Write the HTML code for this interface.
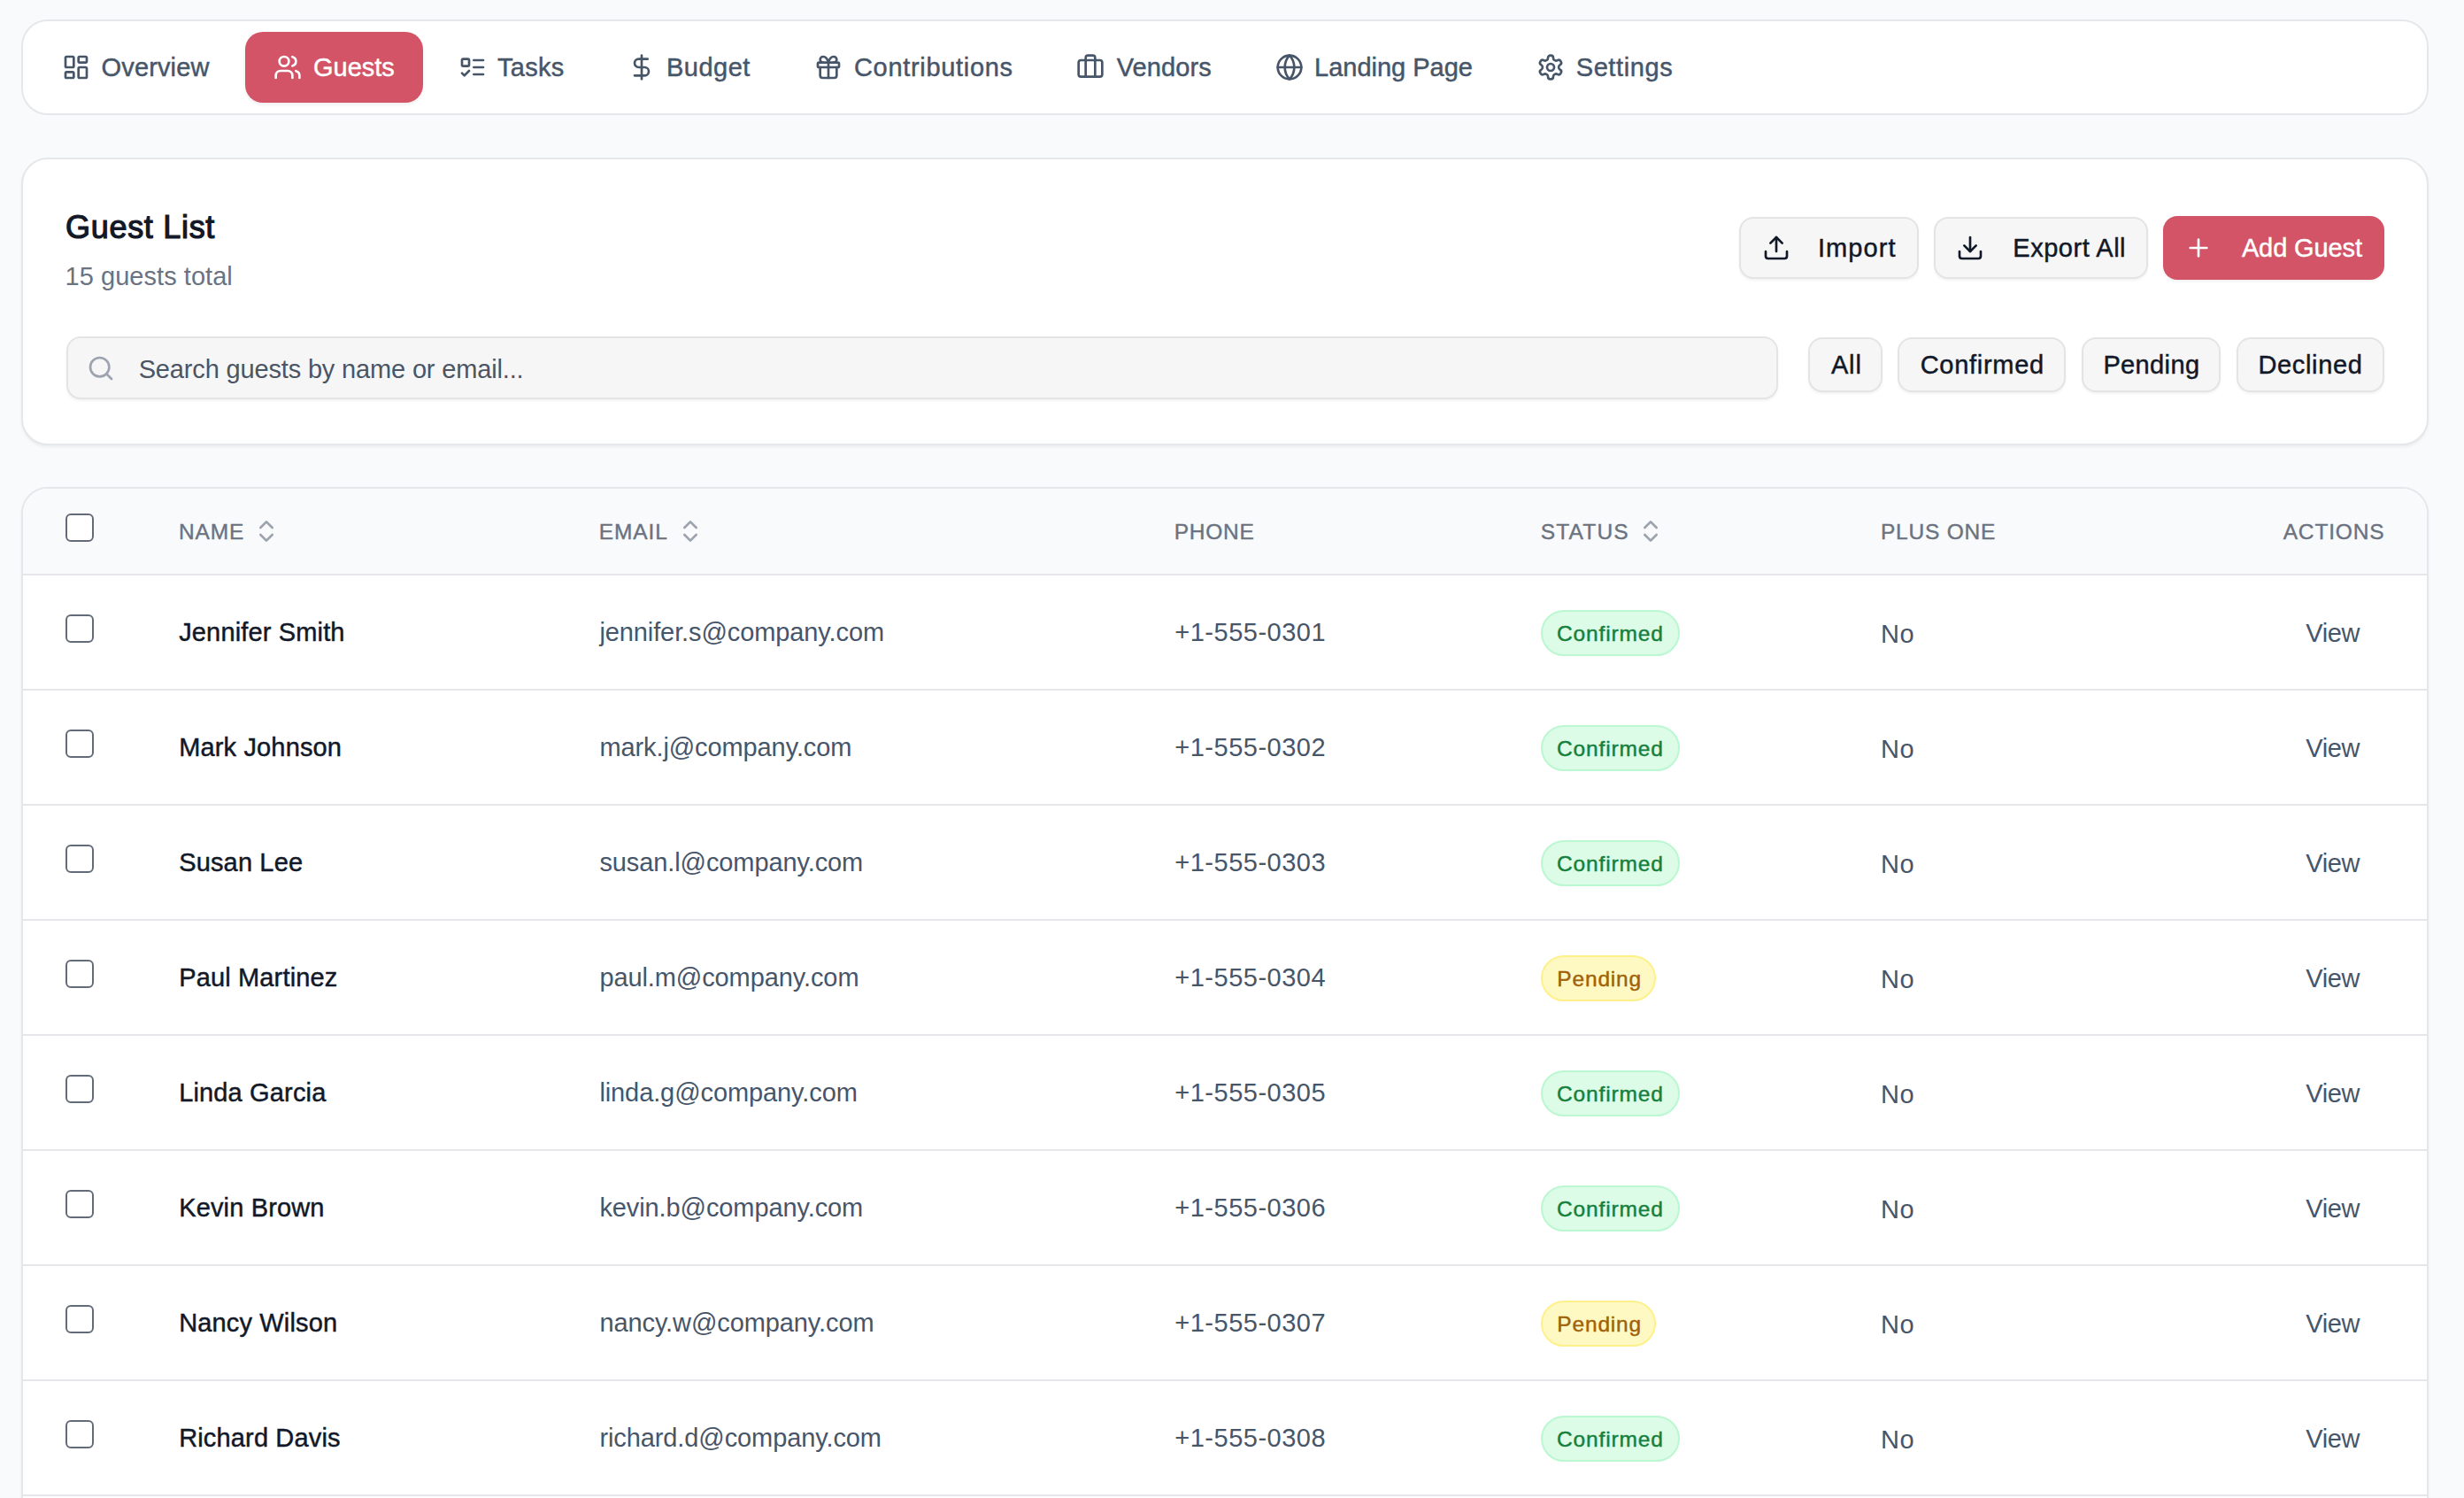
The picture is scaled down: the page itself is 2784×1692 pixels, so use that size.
<!DOCTYPE html>
<html>
<head>
<meta charset="utf-8">
<style>
*{box-sizing:border-box;margin:0;padding:0}
html,body{width:2784px;height:1692px;overflow:hidden;background:#f9fafb;font-family:"Liberation Sans",sans-serif}
.a{position:absolute}
.t{position:absolute;white-space:pre;font-size:29px;line-height:29px}
.md{-webkit-text-stroke:.45px currentColor}
.card{position:absolute;left:24px;width:2720px;background:#fff;border:2px solid #e5e7eb;border-radius:30px}
.ic{position:absolute;width:32px;height:32px;fill:none;stroke:currentColor;stroke-width:2;stroke-linecap:round;stroke-linejoin:round}
.nav{color:#475569;-webkit-text-stroke:.45px #475569}
.btn{position:absolute;background:#f6f6f7;border:2px solid #e4e4e7;border-radius:16px;box-shadow:0 2px 3px rgba(0,0,0,.05)}
.hd{position:absolute;white-space:pre;font-size:24.5px;line-height:24.5px;color:#6b7280;top:589px;-webkit-text-stroke:.4px #6b7280}
.cb{position:absolute;left:74px;width:32px;height:32px;border:2.5px solid #646b78;border-radius:6px;background:#fff}
.nm{color:#111827;letter-spacing:.15px;-webkit-text-stroke:.45px #111827}
.em{color:#475569;letter-spacing:-.1px}
.ph{color:#475569;letter-spacing:.5px}
.no{color:#475569;letter-spacing:.7px}
.vw{color:#475569;letter-spacing:-.37px}
.badge{position:absolute;left:1741px;height:52px;border-radius:26px;border:2px solid}
.bt{position:absolute;white-space:pre;font-size:24.5px;line-height:24.5px}
.ok{background:#dcfce7;border-color:#bbf7d0}
.okt{color:#15803d;letter-spacing:.87px;-webkit-text-stroke:.45px #15803d}
.pd{background:#fef9c3;border-color:#fef08a}
.pdt{color:#a16207;letter-spacing:.83px;-webkit-text-stroke:.45px #a16207}
.line{position:absolute;left:26px;width:2716px;height:2px;background:#e5e7eb}
</style>
</head>
<body>
<!-- NAV CARD -->
<div class="card" style="top:22px;height:108px"></div>
<div class="a" style="left:277px;top:36px;width:201px;height:80px;background:#d35367;border-radius:20px;box-shadow:0 2px 4px rgba(0,0,0,.08)"></div>

<svg class="ic nav" style="left:70px;top:60px" viewBox="0 0 24 24"><rect width="7" height="9" x="3" y="3" rx="1"/><rect width="7" height="5" x="14" y="3" rx="1"/><rect width="7" height="9" x="14" y="12" rx="1"/><rect width="7" height="5" x="3" y="16" rx="1"/></svg>
<div class="t nav" style="left:114.6px;top:62px;letter-spacing:.13px">Overview</div>

<svg class="ic" style="left:308.7px;top:60px;color:#fff" viewBox="0 0 24 24"><path d="M16 21v-2a4 4 0 0 0-4-4H6a4 4 0 0 0-4 4v2"/><circle cx="9" cy="7" r="4"/><path d="M22 21v-2a4 4 0 0 0-3-3.87"/><path d="M16 3.13a4 4 0 0 1 0 7.75"/></svg>
<div class="t md" style="left:354px;top:62px;color:#fff">Guests</div>

<svg class="ic nav" style="left:518px;top:60px" viewBox="0 0 24 24"><rect x="3" y="5" width="6" height="6" rx="1"/><path d="m3 17 2 2 4-4"/><path d="M13 6h8"/><path d="M13 12h8"/><path d="M13 18h8"/></svg>
<div class="t nav" style="left:562px;top:62px;letter-spacing:.25px">Tasks</div>

<svg class="ic nav" style="left:709px;top:60px" viewBox="0 0 24 24"><line x1="12" x2="12" y1="2" y2="22"/><path d="M17 5H9.5a3.5 3.5 0 0 0 0 7h5a3.5 3.5 0 0 1 0 7H6"/></svg>
<div class="t nav" style="left:753px;top:62px;letter-spacing:.5px">Budget</div>

<svg class="ic nav" style="left:920px;top:60px" viewBox="0 0 24 24"><rect x="3" y="8" width="18" height="4" rx="1"/><path d="M12 8v13"/><path d="M19 12v7a2 2 0 0 1-2 2H7a2 2 0 0 1-2-2v-7"/><path d="M7.5 8a2.5 2.5 0 0 1 0-5A4.8 8 0 0 1 12 8a4.8 8 0 0 1 4.5-5 2.5 2.5 0 0 1 0 5"/></svg>
<div class="t nav" style="left:965px;top:62px;letter-spacing:.68px">Contributions</div>

<svg class="ic nav" style="left:1216px;top:60px" viewBox="0 0 24 24"><path d="M16 20V4a2 2 0 0 0-2-2h-4a2 2 0 0 0-2 2v16"/><rect width="20" height="14" x="2" y="6" rx="2"/></svg>
<div class="t nav" style="left:1261.7px;top:62px;letter-spacing:.12px">Vendors</div>

<svg class="ic nav" style="left:1441px;top:60px" viewBox="0 0 24 24"><circle cx="12" cy="12" r="10"/><path d="M12 2a14.5 14.5 0 0 0 0 20 14.5 14.5 0 0 0 0-20"/><path d="M2 12h20"/></svg>
<div class="t nav" style="left:1485px;top:62px">Landing Page</div>

<svg class="ic nav" style="left:1736.3px;top:60px" viewBox="0 0 24 24"><path d="M12.22 2h-.44a2 2 0 0 0-2 2v.18a2 2 0 0 1-1 1.73l-.43.25a2 2 0 0 1-2 0l-.15-.08a2 2 0 0 0-2.73.73l-.22.38a2 2 0 0 0 .73 2.73l.15.1a2 2 0 0 1 1 1.72v.51a2 2 0 0 1-1 1.74l-.15.09a2 2 0 0 0-.73 2.73l.22.38a2 2 0 0 0 2.73.73l.15-.08a2 2 0 0 1 2 0l.43.25a2 2 0 0 1 1 1.73V20a2 2 0 0 0 2 2h.44a2 2 0 0 0 2-2v-.18a2 2 0 0 1 1-1.73l.43-.25a2 2 0 0 1 2 0l.15.08a2 2 0 0 0 2.73-.73l.22-.39a2 2 0 0 0-.73-2.73l-.15-.08a2 2 0 0 1-1-1.74v-.5a2 2 0 0 1 1-1.74l.15-.09a2 2 0 0 0 .73-2.73l-.22-.38a2 2 0 0 0-2.73-.73l-.15.08a2 2 0 0 1-2 0l-.43-.25a2 2 0 0 1-1-1.73V4a2 2 0 0 0-2-2z"/><circle cx="12" cy="12" r="3"/></svg>
<div class="t nav" style="left:1780.7px;top:62px;letter-spacing:.6px">Settings</div>

<!-- GUEST LIST CARD -->
<div class="card" style="top:178px;height:325px;box-shadow:0 2px 3px rgba(0,0,0,.06)"></div>
<div class="t" style="left:74px;top:239px;font-size:36px;line-height:36px;font-weight:400;color:#111827;letter-spacing:.7px;-webkit-text-stroke:1.2px #111827">Guest List</div>
<div class="t" style="left:73.6px;top:298px;color:#6b7280;letter-spacing:.04px">15 guests total</div>

<div class="btn" style="left:1965px;top:244.5px;width:203px;height:70.5px"></div>
<svg class="ic" style="left:1991px;top:263.6px;color:#111827" viewBox="0 0 24 24"><path d="M21 15v4a2 2 0 0 1-2 2H5a2 2 0 0 1-2-2v-4"/><polyline points="17 8 12 3 7 8"/><line x1="12" x2="12" y1="3" y2="15"/></svg>
<div class="t md" style="left:2054px;top:266px;color:#111827;letter-spacing:1.06px">Import</div>

<div class="btn" style="left:2185px;top:244.5px;width:242px;height:70.5px"></div>
<svg class="ic" style="left:2210.4px;top:264px;color:#111827" viewBox="0 0 24 24"><path d="M21 15v4a2 2 0 0 1-2 2H5a2 2 0 0 1-2-2v-4"/><polyline points="7 10 12 15 17 10"/><line x1="12" x2="12" y1="15" y2="3"/></svg>
<div class="t md" style="left:2274.3px;top:266px;color:#111827;letter-spacing:.53px">Export All</div>

<div class="a" style="left:2444px;top:244px;width:250px;height:72px;background:#d35367;border-radius:16px;box-shadow:0 2px 3px rgba(0,0,0,.06)"></div>
<svg class="ic" style="left:2468px;top:264px;color:#fff" viewBox="0 0 24 24"><path d="M5 12h14"/><path d="M12 5v14"/></svg>
<div class="t md" style="left:2532.9px;top:266px;color:#fff;letter-spacing:-.11px">Add Guest</div>

<div class="btn" style="left:75px;top:380px;width:1934px;height:71px;border-radius:16px"></div>
<svg class="ic" style="left:98.2px;top:400.3px;color:#9ca3af" viewBox="0 0 24 24"><circle cx="11" cy="11" r="8"/><path d="m21 21-4.3-4.3"/></svg>
<div class="t" style="left:156.7px;top:403px;color:#4b5563;letter-spacing:-.16px">Search guests by name or email...</div>

<div class="btn" style="left:2042.6px;top:380.5px;width:84.7px;height:62px"></div>
<div class="t md" style="left:2068.9px;top:398px;color:#111827;letter-spacing:.85px">All</div>
<div class="btn" style="left:2144.4px;top:380.5px;width:189.7px;height:62px"></div>
<div class="t md" style="left:2169.7px;top:398px;color:#111827;letter-spacing:.71px">Confirmed</div>
<div class="btn" style="left:2351.7px;top:380.5px;width:157.7px;height:62px"></div>
<div class="t md" style="left:2376.4px;top:398px;color:#111827;letter-spacing:.37px">Pending</div>
<div class="btn" style="left:2526.5px;top:380.5px;width:167px;height:62px"></div>
<div class="t md" style="left:2551.5px;top:398px;color:#111827;letter-spacing:.64px">Declined</div>

<!-- TABLE CARD -->
<div class="card" style="top:550px;height:1300px;overflow:hidden;box-shadow:0 1px 3px rgba(0,0,0,.06)">
  <div class="a" style="left:0;top:0;width:100%;height:98px;background:#f9fafb"></div>
</div>
<div class="line" style="top:648px"></div>
<div class="cb" style="top:580px"></div>
<div class="hd" style="left:201.9px;letter-spacing:.93px">NAME</div>
<svg class="ic" style="left:285.2px;top:584px;color:#9ca3af" viewBox="0 0 24 24"><path d="m7 15 5 5 5-5"/><path d="m7 9 5-5 5 5"/></svg>
<div class="hd" style="left:676.8px;letter-spacing:.9px">EMAIL</div>
<svg class="ic" style="left:764.2px;top:584px;color:#9ca3af" viewBox="0 0 24 24"><path d="m7 15 5 5 5-5"/><path d="m7 9 5-5 5 5"/></svg>
<div class="hd" style="left:1326.7px;letter-spacing:.77px">PHONE</div>
<div class="hd" style="left:1740.7px;letter-spacing:1.2px">STATUS</div>
<svg class="ic" style="left:1849.2px;top:584px;color:#9ca3af" viewBox="0 0 24 24"><path d="m7 15 5 5 5-5"/><path d="m7 9 5-5 5 5"/></svg>
<div class="hd" style="left:2124.9px;letter-spacing:.8px">PLUS ONE</div>
<div class="hd" style="left:2579.7px;letter-spacing:.83px">ACTIONS</div>

<div class="cb" style="top:694px"></div>
<div class="t nm" style="left:202.2px;top:700px">Jennifer Smith</div>
<div class="t em" style="left:677.4px;top:700px">jennifer.s@company.com</div>
<div class="t ph" style="left:1327.3px;top:700px">+1-555-0301</div>
<div class="badge ok" style="top:689px;width:157px"></div>
<div class="bt okt" style="left:1759px;top:704px">Confirmed</div>
<div class="t no" style="left:2124.9px;top:702px">No</div>
<div class="t vw" style="left:2605.3px;top:701px">View</div>
<div class="line" style="top:778px"></div>
<div class="cb" style="top:824px"></div>
<div class="t nm" style="left:202.2px;top:830px">Mark Johnson</div>
<div class="t em" style="left:677.4px;top:830px">mark.j@company.com</div>
<div class="t ph" style="left:1327.3px;top:830px">+1-555-0302</div>
<div class="badge ok" style="top:819px;width:157px"></div>
<div class="bt okt" style="left:1759px;top:834px">Confirmed</div>
<div class="t no" style="left:2124.9px;top:832px">No</div>
<div class="t vw" style="left:2605.3px;top:831px">View</div>
<div class="line" style="top:908px"></div>
<div class="cb" style="top:954px"></div>
<div class="t nm" style="left:202.2px;top:960px">Susan Lee</div>
<div class="t em" style="left:677.4px;top:960px">susan.l@company.com</div>
<div class="t ph" style="left:1327.3px;top:960px">+1-555-0303</div>
<div class="badge ok" style="top:949px;width:157px"></div>
<div class="bt okt" style="left:1759px;top:964px">Confirmed</div>
<div class="t no" style="left:2124.9px;top:962px">No</div>
<div class="t vw" style="left:2605.3px;top:961px">View</div>
<div class="line" style="top:1038px"></div>
<div class="cb" style="top:1084px"></div>
<div class="t nm" style="left:202.2px;top:1090px">Paul Martinez</div>
<div class="t em" style="left:677.4px;top:1090px">paul.m@company.com</div>
<div class="t ph" style="left:1327.3px;top:1090px">+1-555-0304</div>
<div class="badge pd" style="top:1079px;width:130px"></div>
<div class="bt pdt" style="left:1759.3px;top:1094px">Pending</div>
<div class="t no" style="left:2124.9px;top:1092px">No</div>
<div class="t vw" style="left:2605.3px;top:1091px">View</div>
<div class="line" style="top:1168px"></div>
<div class="cb" style="top:1214px"></div>
<div class="t nm" style="left:202.2px;top:1220px">Linda Garcia</div>
<div class="t em" style="left:677.4px;top:1220px">linda.g@company.com</div>
<div class="t ph" style="left:1327.3px;top:1220px">+1-555-0305</div>
<div class="badge ok" style="top:1209px;width:157px"></div>
<div class="bt okt" style="left:1759px;top:1224px">Confirmed</div>
<div class="t no" style="left:2124.9px;top:1222px">No</div>
<div class="t vw" style="left:2605.3px;top:1221px">View</div>
<div class="line" style="top:1298px"></div>
<div class="cb" style="top:1344px"></div>
<div class="t nm" style="left:202.2px;top:1350px">Kevin Brown</div>
<div class="t em" style="left:677.4px;top:1350px">kevin.b@company.com</div>
<div class="t ph" style="left:1327.3px;top:1350px">+1-555-0306</div>
<div class="badge ok" style="top:1339px;width:157px"></div>
<div class="bt okt" style="left:1759px;top:1354px">Confirmed</div>
<div class="t no" style="left:2124.9px;top:1352px">No</div>
<div class="t vw" style="left:2605.3px;top:1351px">View</div>
<div class="line" style="top:1428px"></div>
<div class="cb" style="top:1474px"></div>
<div class="t nm" style="left:202.2px;top:1480px">Nancy Wilson</div>
<div class="t em" style="left:677.4px;top:1480px">nancy.w@company.com</div>
<div class="t ph" style="left:1327.3px;top:1480px">+1-555-0307</div>
<div class="badge pd" style="top:1469px;width:130px"></div>
<div class="bt pdt" style="left:1759.3px;top:1484px">Pending</div>
<div class="t no" style="left:2124.9px;top:1482px">No</div>
<div class="t vw" style="left:2605.3px;top:1481px">View</div>
<div class="line" style="top:1558px"></div>
<div class="cb" style="top:1604px"></div>
<div class="t nm" style="left:202.2px;top:1610px">Richard Davis</div>
<div class="t em" style="left:677.4px;top:1610px">richard.d@company.com</div>
<div class="t ph" style="left:1327.3px;top:1610px">+1-555-0308</div>
<div class="badge ok" style="top:1599px;width:157px"></div>
<div class="bt okt" style="left:1759px;top:1614px">Confirmed</div>
<div class="t no" style="left:2124.9px;top:1612px">No</div>
<div class="t vw" style="left:2605.3px;top:1611px">View</div>
<div class="line" style="top:1688px"></div>
</body>
</html>
